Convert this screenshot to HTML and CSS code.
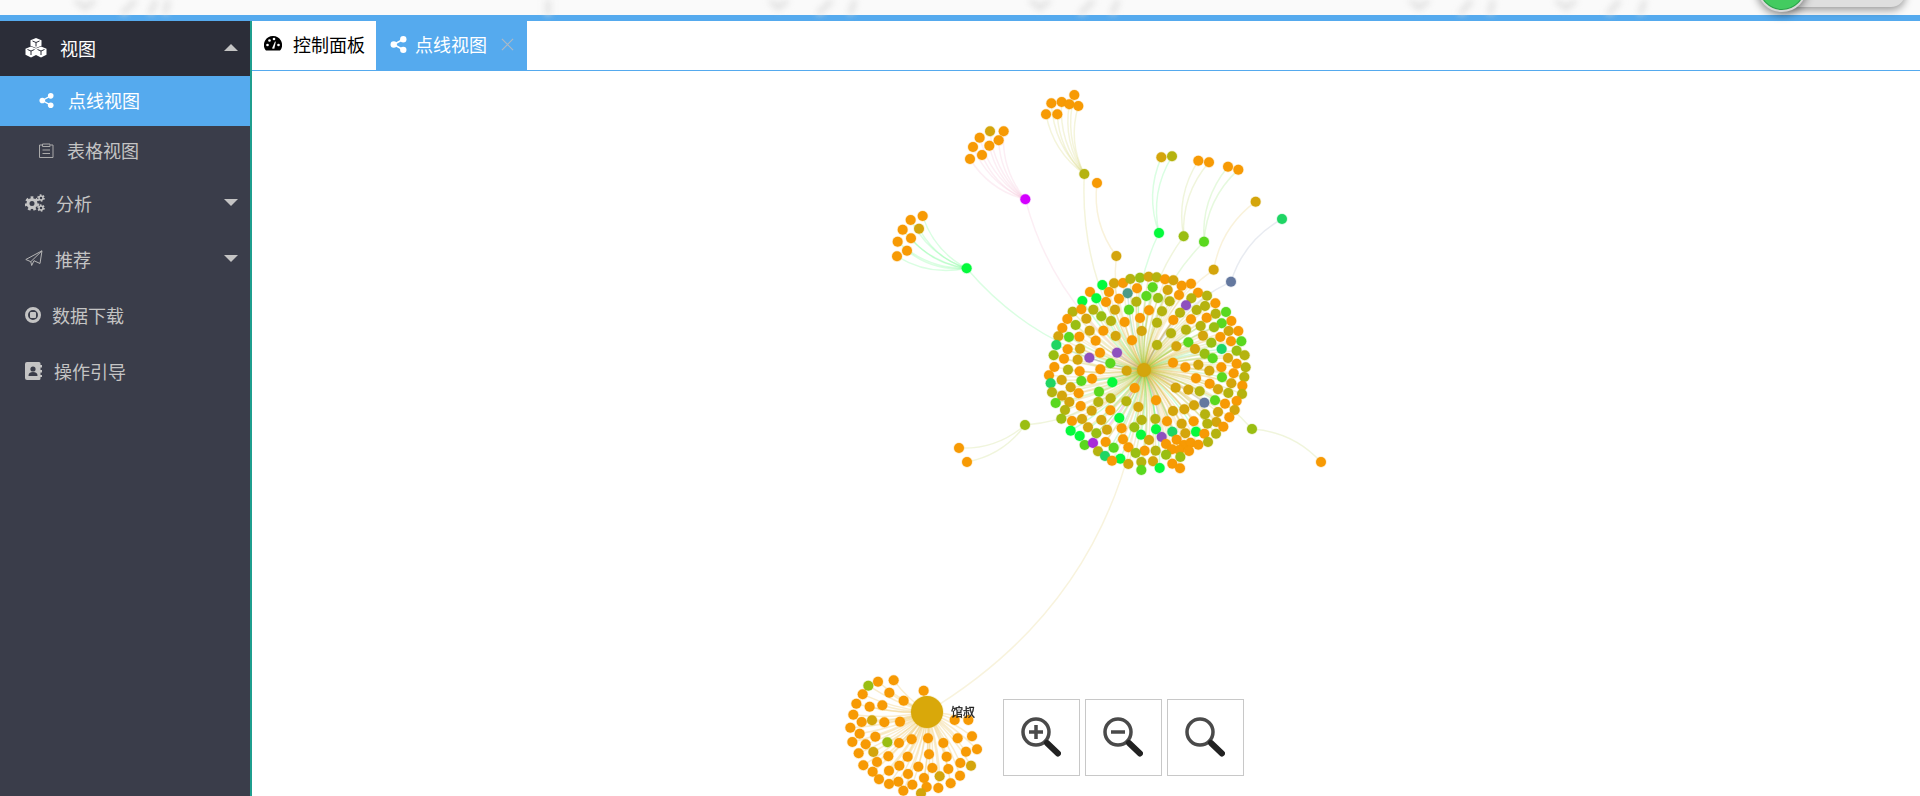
FILE: index.html
```html
<!DOCTYPE html>
<html lang="zh-CN">
<head>
    <meta charset="UTF-8">
    <meta name="viewport" content="width=device-width, initial-scale=1.0">
    <title>点线视图</title>
    <link rel="stylesheet" href="styles.css">
</head>
<body>

    <!-- Blurred page background strip and the toggle that hangs over it -->
    <div class="top-strip">
        <svg class="strip-art" width="1920" height="15" viewBox="0 0 1920 15">
            <path d="M75 0l10 8 10-8M122 14l14-14M150 14l6-14M165 14l3-14M548 0v15M770 0l8 8 10-8M818 14l14-14M850 14l5-14M1030 0l10 8 10-8M1080 14l14-14M1112 14l6-14M1410 0l9 8 10-8M1460 14l12-14M1490 14l3-14M1556 0l10 8 10-8M1608 14l12-14M1640 14l5-14"/>
        </svg>
        <div class="toggle">
            <span class="toggle-knob"></span>
        </div>
    </div>

    <div class="layout">

        <!-- Sidebar -->
        <nav class="sidebar">
            <div class="menu-item menu-open">
                <svg class="icon icon-cubes" viewBox="0 0 22 20">
                    <path d="M11 0l5.500 2.200v5.600L11 10 5.500 7.800V2.200z"/><path d="M6 8.500l5.500 2.200v6L6 19.500.5 16.700v-6z"/><path d="M16 8.500l5.500 2.200v6L16 19.500l-5.500-2.800v-6z"/>
                    <path class="cut" d="M7.500 3l3.500 1.500L14.500 3M11 4.500v4M2.500 11.500L6 13l3.500-1.500M6 13v4M12.500 11.500L16 13l3.500-1.500M16 13v4"/>
                </svg>
                <span>视图</span>
                <i class="caret caret-up"></i>
            </div>
            <div class="sub-item sub-active">
                <svg class="icon icon-share" viewBox="0 0 16 16">
                    <circle cx="3.500" cy="8" r="3"/><circle cx="12.500" cy="3" r="3"/><circle cx="12.500" cy="13" r="3"/>
                    <path d="M3.500 8l9-5M3.500 8l9 5"/>
                </svg>
                <span>点线视图</span>
            </div>
            <div class="sub-item">
                <svg class="icon icon-clip" viewBox="0 0 15 15">
                    <path d="M3 2H.5v12.500h13.500V2H11.500M3.500 1h7.500v2.500H3.500zM3.500 7h7.500M3.500 10.500h7.500"/>
                </svg>
                <span>表格视图</span>
            </div>
            <div class="menu-item">
                <svg class="icon icon-cogs" viewBox="0 0 20 18">
                    <circle class="gear-teeth" cx="7" cy="9.500" r="5.500"/><circle class="gear-hub" cx="7" cy="9.500" r="4"/>
                    <circle class="small-teeth" cx="16" cy="4" r="2.800"/><circle class="small-hub" cx="16" cy="4" r="2"/>
                    <circle class="small-teeth" cx="16" cy="14" r="2.800"/><circle class="small-hub" cx="16" cy="14" r="2"/>
                </svg>
                <span>分析</span>
                <i class="caret"></i>
            </div>
            <div class="menu-item">
                <svg class="icon icon-plane" viewBox="0 0 18 17">
                    <path d="M17 .8L.8 9.500l5 2.200zM17 .8L15 13.500l-6-2.800-2.300 4.800-.9-3.800"/>
                </svg>
                <span>推荐</span>
                <i class="caret"></i>
            </div>
            <div class="menu-item">
                <svg class="icon icon-stop" viewBox="0 0 16 16">
                    <circle cx="8" cy="8" r="6.500"/><rect x="5" y="5" width="6" height="6" rx="1"/>
                </svg>
                <span>数据下载</span>
            </div>
            <div class="menu-item">
                <svg class="icon icon-book" viewBox="0 0 17 18">
                    <path class="book" d="M2 0h12a1.500 1.500 0 0 1 1.500 1.500V3H17v2.500h-1.500V8H17v2.500h-1.500V13H17v2h-1.500v1.500A1.500 1.500 0 0 1 14 18H2a2 2 0 0 1-2-2V2a2 2 0 0 1 2-2z"/>
                    <circle class="person" cx="8" cy="7" r="2.600"/><path class="person" d="M3.500 14c0-3 1.500-4 4.500-4s4.500 1 4.500 4z"/>
                </svg>
                <span>操作引导</span>
            </div>
        </nav>

        <!-- Main panel -->
        <main class="content">
            <div class="tabs">
                <div class="tab">
                    <svg class="tab-gauge" viewBox="0 0 18 16">
                        <path class="gauge-body" d="M9 0a9 9 0 0 1 7.700 13.700 2 2 0 0 1-1.700.9H3a2 2 0 0 1-1.700-.9A9 9 0 0 1 9 0z"/>
                        <circle cx="3.500" cy="9" r="1.300"/><circle cx="5.500" cy="4.500" r="1.300"/><circle cx="10" cy="3" r="1.300"/><circle cx="14.500" cy="9" r="1.300"/>
                        <path d="M8 12.500l3-7 .8.300-1.500 7z"/>
                    </svg>
                    <span>控制面板</span>
                </div>
                <div class="tab tab-active">
                    <svg class="tab-share" viewBox="0 0 16 16">
                        <circle cx="3.500" cy="8" r="3"/><circle cx="12.500" cy="3" r="3"/><circle cx="12.500" cy="13" r="3"/>
                        <path d="M3.500 8l9-5M3.500 8l9 5"/>
                    </svg>
                    <span>点线视图</span>
                    <svg class="tab-close" viewBox="0 0 14 14"><path d="M1 1l12 12M13 1L1 13"/></svg>
                </div>
            </div>

            <div class="graph-panel">
                <svg id="graph" class="graph" width="1668" height="725" viewBox="252 71 1668 725"></svg>

                <div class="zoom-tools">
                    <div class="zoom-btn">
                        <svg viewBox="0 0 75 75"><circle class="lens" cx="32" cy="32" r="13"/><path class="mark" d="M25 32h14M32 25v14"/><path class="handle" d="M43 43l11 10.500"/></svg>
                    </div>
                    <div class="zoom-btn">
                        <svg viewBox="0 0 75 75"><circle class="lens" cx="32" cy="32" r="13"/><path class="mark" d="M25 32h14"/><path class="handle" d="M43 43l11 10.500"/></svg>
                    </div>
                    <div class="zoom-btn">
                        <svg viewBox="0 0 75 75"><circle class="lens" cx="32" cy="32" r="13"/><path class="handle" d="M43 43l11 10.500"/></svg>
                    </div>
                </div>
            </div>
        </main>
    </div>

    <script src="script.js"></script>
</body>
</html>
```

FILE: styles.css
```css
* {
    box-sizing: border-box;
}
html, body {
    height: 100%;
}
body {
    margin: 0;
    overflow: hidden;
    display: flex;
    flex-direction: column;
    background: white;
    font-family: "Noto Sans CJK SC", "Noto Sans", sans-serif;
    font-size: 18px;
}

/* top strip */
.top-strip {
    position: relative;
    height: 21px;
    flex: none;
    background: #fafafa;
    border-bottom: 6px solid #55aaee;
}
.strip-art {
    display: block;
    filter: blur(3px);
}
.strip-art path {
    fill: none;
    stroke: #e0e0e0;
    stroke-width: 5;
}
.toggle {
    position: absolute;
    top: -30px;
    right: 15px;
    width: 130px;
    height: 37px;
    background: #dedede;
    border-radius: 14px;
    box-shadow: 0 3px 8px rgba(0, 0, 0, 0.4);
}
.toggle-knob {
    position: absolute;
    left: -18px;
    top: -8px;
    width: 50px;
    height: 50px;
    border-radius: 50%;
    background: #43cb60;
    border: 2px solid #d8d8d8;
    box-shadow: inset 0 0 0 1px #2b9e48, 0 3px 8px rgba(0, 0, 0, 0.45);
}

.layout {
    flex: 1;
    display: flex;
    min-height: 0;
}

/* sidebar */
.sidebar {
    width: 252px;
    flex: none;
    background: #3a3d4a;
    border-right: 2px solid #1f9e8e;
    color: #c4c4c4;
}
.menu-item {
    height: 56px;
    display: flex;
    align-items: center;
    padding: 0 12px 3px 25px;
}
.menu-open {
    height: 55px;
    padding-bottom: 2px;
    background: #2b2d38;
    color: white;
}
.sub-item {
    height: 50px;
    display: flex;
    align-items: center;
    padding: 0 0 2px 39px;
}
.sub-active {
    background: #55aaee;
    color: white;
}
.icon {
    flex: none;
}
.icon-cubes {
    width: 22px;
    height: 20px;
    margin-right: 13px;
    fill: white;
}
.icon-cubes .cut {
    fill: none;
    stroke: #2b2d38;
    stroke-width: 1;
}
.icon-share {
    width: 15px;
    height: 15px;
    margin-right: 14px;
    fill: white;
}
.icon-share path, .tab-share path {
    fill: none;
    stroke: white;
    stroke-width: 1.500;
}
.icon-clip {
    width: 15px;
    height: 15px;
    margin-right: 13px;
    fill: none;
    stroke: #aaa;
}
.icon-cogs {
    width: 20px;
    height: 18px;
    margin-right: 11px;
}
.gear-teeth {
    fill: none;
    stroke: #c4c4c4;
    stroke-width: 3.500;
    stroke-dasharray: 2.500 2.300;
}
.gear-hub {
    fill: #3a3d4a;
    stroke: #c4c4c4;
    stroke-width: 3;
}
.small-teeth {
    fill: none;
    stroke: #c4c4c4;
    stroke-width: 2;
    stroke-dasharray: 1.500 1.430;
}
.small-hub {
    fill: #3a3d4a;
    stroke: #c4c4c4;
    stroke-width: 1.500;
}
.icon-plane {
    width: 18px;
    height: 17px;
    margin-right: 12px;
    fill: none;
    stroke: #b5b5b5;
}
.icon-stop {
    width: 16px;
    height: 16px;
    margin-right: 11px;
}
.icon-stop circle {
    fill: #3a3d4a;
    stroke: #c4c4c4;
    stroke-width: 3;
}
.icon-stop rect {
    fill: #c4c4c4;
}
.icon-book {
    width: 17px;
    height: 18px;
    margin-right: 12px;
}
.book {
    fill: #c4c4c4;
}
.person {
    fill: #3a3d4a;
}
.caret {
    margin-left: auto;
    width: 0;
    height: 0;
    border-left: 7px solid transparent;
    border-right: 7px solid transparent;
    border-top: 7px solid #c4c4c4;
}
.caret-up {
    border-top: 0;
    border-bottom: 7px solid #c4c4c4;
}

/* main panel */
.content {
    flex: 1;
    min-width: 0;
    display: flex;
    flex-direction: column;
}
.tabs {
    height: 50px;
    flex: none;
    display: flex;
    border-bottom: 1px solid #55aaee;
}
.tab {
    width: 124px;
    display: flex;
    align-items: center;
    padding: 0 0 3px 12px;
    color: black;
}
.tab-active {
    width: 151px;
    padding-left: 14px;
    background: #55aaee;
    color: white;
}
.tab-gauge {
    width: 18px;
    height: 16px;
    margin-right: 11px;
}
.tab-gauge circle, .tab-gauge path {
    fill: white;
}
.tab-gauge .gauge-body {
    fill: black;
}
.tab-share {
    width: 17px;
    height: 17px;
    margin-right: 8px;
    fill: white;
}
.tab-close {
    width: 13px;
    height: 13px;
    margin-left: 14px;
    fill: none;
    stroke: #aeb9c4;
    stroke-width: 1.300;
}

.graph-panel {
    position: relative;
    flex: 1;
    min-height: 0;
    overflow: hidden;
}
.graph {
    display: block;
    filter: blur(0.4px);
}
.graph-label {
    font-size: 12px;
    fill: #222;
    stroke: #222;
    stroke-width: 0.3;
}
.zoom-tools {
    position: absolute;
    left: 751px;
    bottom: 20px;
    display: flex;
    gap: 5px;
}
.zoom-btn {
    width: 77px;
    height: 77px;
    border: 1px solid #c8c8c8;
    background: white;
}
.zoom-btn svg {
    display: block;
    width: 75px;
    height: 75px;
    filter: blur(0.4px);
}
.lens {
    fill: white;
    stroke: #4a4a4a;
    stroke-width: 3.500;
}
.mark {
    fill: none;
    stroke: #4a4a4a;
    stroke-width: 3.500;
}
.handle {
    fill: none;
    stroke: #222;
    stroke-width: 6;
    stroke-linecap: round;
}
```

FILE: script.js
```js
// Node colours as they show up in the picture
const COLORS = {
    O: "#f79a04", Y: "#d4a50c", L: "#b5b30f", G: "#9abe12", B: "#5ad81f",
    N: "#05fa3c", T: "#1fd564", D: "#4a9a88", P: "#8e50be", S: "#64789f",
    M: "#a82ad8", V: "#d400ff"
};

const SVG_NS = "http://www.w3.org/2000/svg";
const graph = document.getElementById("graph");

// Positions were read off 3x crops, so each list carries its crop origin
function parseNodes(ox, oy, text) {
    return text.trim().split(/\s*,\s*/).map(item => {
        let parts = item.split(/\s+/);
        return { x: ox + parts[0] / 3, y: oy + parts[1] / 3, color: COLORS[parts[2]] };
    });
}

const mainCluster = parseNodes(1040, 270, `
    187 45 N, 222 40 Y, 249 39 O, 271 27 L, 300 23 G, 326 20 Y, 350 22 L, 375 28 O, 400 31 Y, 425 47 O, 453 41 O,
    474 68 O, 501 77 L, 454 85 L, 526 100 O, 495 108 L, 470 120 L, 438 106 P, 420 128 L, 558 126 B, 527 131 L,
    150 66 O, 207 66 O, 263 70 D, 291 55 O, 338 52 B, 383 60 Y, 417 75 O, 169 85 N, 127 93 N, 237 86 O, 198 96 O,
    289 95 L, 319 78 B, 354 84 G, 389 94 L,
    98 125 L, 124 118 O, 160 119 L, 225 119 Y, 267 119 B, 327 121 O, 366 124 L, 184 139 G, 82 147 O, 139 146 Y,
    213 153 L, 254 156 O, 300 144 O, 351 158 L, 400 150 O, 453 148 O, 500 143 O, 482 168 L, 566 183 Y, 574 153 O,
    545 160 B, 522 172 G, 107 165 G,
    67 174 O, 149 182 Y, 190 182 O, 305 183 Y, 393 190 L, 438 179 L, 489 197 Y, 595 183 O, 55 199 Y, 87 201 B,
    118 200 O, 227 198 Y, 167 212 O, 276 211 O, 351 225 L, 409 229 Y, 445 217 B, 514 218 G, 541 201 O, 573 214 O,
    604 214 B, 49 225 T,
    83 238 O, 120 236 Y, 180 248 O, 231 248 P, 148 263 P, 41 256 G, 113 269 Y, 72 266 O, 465 237 Y, 545 237 T,
    590 242 G, 614 256 L, 494 251 G, 518 265 B, 564 264 Y, 399 278 O, 475 284 Y, 590 281 O, 544 292 O, 211 280 B,
    43 291 O,
    84 299 L, 119 304 O, 181 298 O, 260 302 Y, 436 292 O, 508 302 Y, 617 292 L, 581 310 O, 613 321 L, 27 316 O,
    65 330 Y, 124 333 B, 156 326 O, 217 337 N, 32 340 T, 468 325 O, 546 322 B, 509 341 O, 574 340 Y,
    92 352 Y, 36 367 L, 116 370 O, 177 365 B, 284 354 O, 407 353 Y, 445 359 Y, 479 364 L, 534 358 Y, 607 347 O,
    565 369 L, 606 372 L, 66 377 Y, 47 399 B, 88 396 Y, 175 396 L, 212 385 L, 259 394 L, 348 391 O, 590 393 O,
    493 398 S, 525 391 B, 555 401 O,
    122 408 O, 155 422 Y, 211 421 O, 295 411 Y, 462 406 Y, 433 418 Y, 399 423 Y, 534 426 Y, 584 420 Y, 495 433 L,
    75 420 L, 64 446 G, 184 450 Y, 126 447 Y, 96 453 O, 238 444 N, 305 450 L, 346 447 L, 381 454 O, 461 454 O,
    568 442 O, 529 456 Y, 502 461 L,
    92 482 N, 119 498 N, 144 472 Y, 201 479 Y, 245 475 O, 283 472 G, 348 478 N, 425 461 Y, 397 485 T, 468 485 N,
    436 490 Y, 550 470 O, 528 491 L, 493 491 O, 169 490 G, 303 494 N,
    134 525 B, 159 519 M, 197 516 O, 249 508 O, 327 510 Y, 365 501 P, 221 533 B, 265 532 O, 378 522 O, 410 509 O,
    432 525 O, 452 518 O, 475 524 O, 504 516 L, 174 544 L, 314 542 O, 347 542 L, 287 549 G, 396 538 O, 418 540 O,
    447 543 O, 378 554 G, 421 561 G,
    195 558 T, 241 566 N, 216 572 O, 265 582 Y, 304 576 L, 339 574 Y, 397 581 O, 420 595 O, 304 600 B, 359 594 N
`);

const bottomCluster = parseNodes(820, 660, `
    221 61 O, 174 65 O, 145 77 G, 128 103 O, 208 98 O, 311 92 O, 251 122 O, 109 131 O, 149 140 O, 187 136 O,
    100 164 O, 125 186 O, 156 181 Y, 193 187 O, 240 185 O, 91 203 O, 119 221 O, 166 230 O, 97 246 O, 137 253 O,
    202 247 G, 237 249 O, 275 238 O, 324 235 O, 370 249 O, 413 235 O, 456 229 O, 404 180 O, 445 180 O, 438 275 O,
    471 268 O, 116 280 O, 160 276 Y, 205 289 O, 263 290 O, 327 283 O, 380 290 O, 421 309 O, 453 317 Y, 130 316 O,
    171 306 O, 238 317 O, 207 332 O, 295 320 O, 337 324 O, 385 327 O, 158 335 O, 264 342 O, 312 354 O, 359 349 Y,
    420 347 O, 177 358 O, 207 372 O, 235 365 O, 277 374 O, 320 381 O, 355 384 O, 392 370 O, 250 392 O, 303 400 Y
`);

// Small groups around the main cluster: [parent, children]
const branches = [
    ["436 358 V", "270 237 O, 306 225 O, 279 201 O, 328 197 O, 299 173 O, 356 181 O, 330 154 Y, 371 154 O"],
    ["613 282 L", "498 103 O, 532 103 O, 514 70 O, 545 66 O, 568 73 O, 595 78 O, 583 45 O"],
    ["709 528 Y", "651 309 O"],
    ["837 459 N", "844 232 Y, 876 229 L"],
    ["911 469 G", "955 242 O, 987 247 O"],
    ["972 485 B", "1044 260 O, 1075 269 O"],
    ["1001 569 Y", "1127 365 Y"],
    ["1053 605 S", "1206 417 T"],
    ["260 565 N", "51 529 O, 81 512 O, 53 485 O, 93 475 O, 68 449 O, 117 446 Y, 92 420 O, 128 408 O"]
].map(b => ({ parent: parseNodes(880, 80, b[0])[0], children: parseNodes(880, 80, b[1]) }));

// These two sit outside that crop, so they are given in page coordinates
branches.push({ parent: { x: 1252, y: 429, color: COLORS.G }, children: [{ x: 1321, y: 462, color: COLORS.O }] });
branches.push({
    parent: { x: 1025, y: 425, color: COLORS.G },
    children: [{ x: 959, y: 448, color: COLORS.O }, { x: 967, y: 462, color: COLORS.O }]
});

const mainHub = { x: 1144, y: 370, r: 7, color: COLORS.Y };
const bottomHub = { x: 927, y: 712, r: 16, color: "#d9a80a" };

function add(tag, attrs) {
    let el = document.createElementNS(SVG_NS, tag);
    for (let key in attrs) {
        el.setAttribute(key, attrs[key]);
    }
    graph.appendChild(el);
    return el;
}

function drawLink(a, b, color, curve, opacity) {
    let dx = b.x - a.x;
    let dy = b.y - a.y;
    let cx = (a.x + b.x) / 2 + dy * curve;
    let cy = (a.y + b.y) / 2 - dx * curve;
    add("path", {
        d: `M${a.x} ${a.y}Q${cx} ${cy} ${b.x} ${b.y}`,
        fill: "none",
        stroke: color,
        "stroke-opacity": opacity,
        "stroke-width": 1.5
    });
}

function drawNode(n) {
    add("circle", {
        cx: n.x,
        cy: n.y,
        r: n.r || 5,
        fill: n.color,
        stroke: n.color,
        "stroke-opacity": 0.2,
        "stroke-width": 1.5
    });
}

// Pale tint for the links of a group, the magenta hub's links read as pink
function linkTint(color) {
    return color === COLORS.V ? "#e890b8" : color;
}

mainCluster.forEach(n => drawLink(mainHub, n, n.color === COLORS.O ? "#e2b640" : n.color, 0.08, 0.2));
bottomCluster.forEach(n => drawLink(bottomHub, n, "#f0cf80", 0.08, 0.4));
branches.forEach(b => {
    drawLink(mainHub, b.parent, linkTint(b.parent.color), 0.18, 0.15);
    b.children.forEach(c => drawLink(b.parent, c, linkTint(b.parent.color), 0.2, 0.15));
});
drawLink(mainHub, bottomHub, "#e8d890", 0.25, 0.3);

mainCluster.forEach(drawNode);
bottomCluster.forEach(drawNode);
branches.forEach(b => {
    drawNode(b.parent);
    b.children.forEach(drawNode);
});
drawNode(mainHub);
drawNode(bottomHub);

let label = add("text", { x: 951, y: 717, class: "graph-label" });
label.textContent = "馆叔";
```
